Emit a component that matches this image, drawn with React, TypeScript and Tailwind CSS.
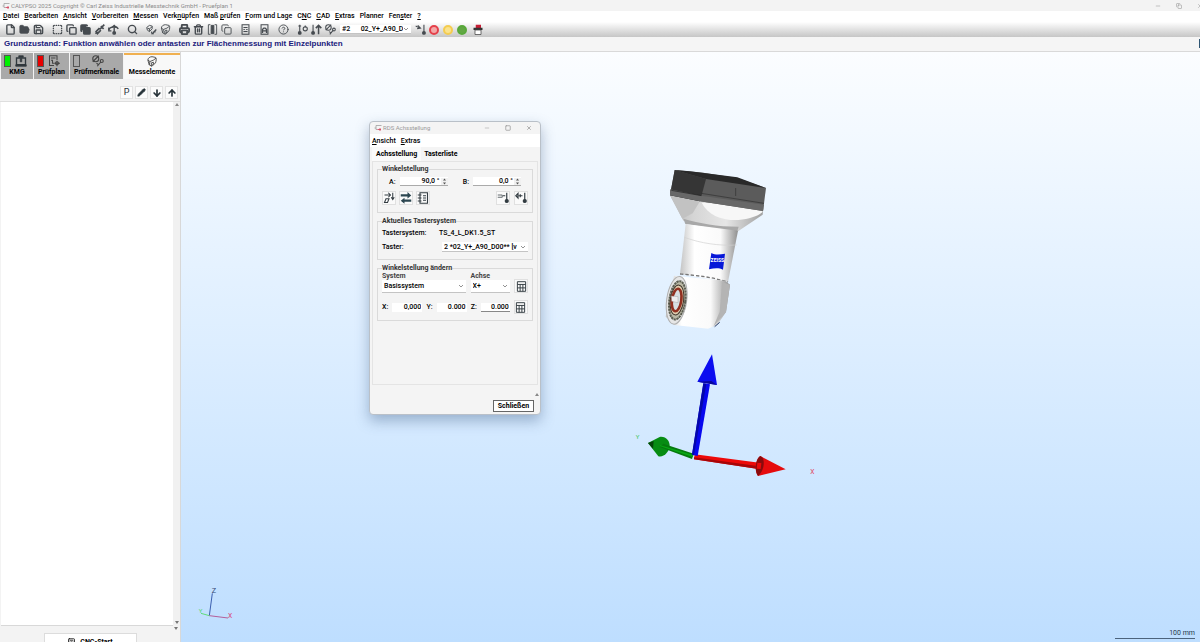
import type { ReactNode } from 'react';
import {
    ArrowDown,
    ArrowUp,
    Calculator,
    CircleHelp,
    Copy,
    File,
    FolderOpen,
    Minus,
    Pencil,
    Printer,
    Save,
    Search,
    Square,
    SquareDashed,
    Trash2,
    X,
} from 'lucide-react';

const menus = [
    ['', 'D', 'atei'],
    ['', 'B', 'earbeiten'],
    ['', 'A', 'nsicht'],
    ['', 'V', 'orbereiten'],
    ['', 'M', 'essen'],
    ['Verk', 'n', 'üpfen'],
    ['Maß ', 'p', 'rüfen'],
    ['', 'F', 'orm und Lage'],
    ['C', 'N', 'C'],
    ['', 'C', 'AD'],
    ['', 'E', 'xtras'],
    ['Planner', '', ''],
    ['Fen', 's', 'ter'],
    ['', '?', ''],
];

const iconClass = 'h-[11px] w-[11px] text-[#464b50]';

function AppLogo() {
    return (
        <svg viewBox="0 0 16 16" className="h-2 w-2 shrink-0" fill="none" strokeWidth="1.6">
            <path d="M15 3H4v5H1M4 8v3h3" stroke="#a0a0a0" />
            <path d="M7 11h7M12 8v6" stroke="#d03a55" />
        </svg>
    );
}

function ProbeIcon({ variant = 'plain' }: { variant?: 'plain' | 'rotate' | 'arrow' | 'up' | 'swap' }) {
    return (
        <svg viewBox="0 0 16 16" className={iconClass} fill="none" stroke="currentColor" strokeWidth="1.6">
            {variant === 'plain' && <path d="M15 1 8 8M10 3l4 4M8 6 3 11l2 3 5-5M2 14l2-2" strokeWidth="2.4" />}
            {variant === 'rotate' && (
                <>
                    <path d="M1 9c1-5 11-7 14-2" strokeWidth="2" />
                    <path d="M9 2v9M6 5l3-3 3 3" strokeWidth="2" />
                    <circle cx="9" cy="13" r="2" fill="currentColor" />
                    <path d="M1 5v5h4" />
                </>
            )}
            {variant === 'arrow' && (
                <>
                    <path d="M4 1v10M2 3h4" />
                    <circle cx="4" cy="13" r="2" fill="currentColor" />
                    <circle cx="12" cy="7" r="3" />
                    <path d="M12 2v3" />
                </>
            )}
            {variant === 'up' && (
                <>
                    <path d="M3 1v10" />
                    <circle cx="3" cy="13" r="2" fill="currentColor" />
                    <path d="M11 15V4M7 6l4-4 4 4" strokeWidth="2.2" />
                </>
            )}
            {variant === 'swap' && (
                <>
                    <path d="M1 3l6 3M4 2l4 4-5 1M13 1v10" />
                    <circle cx="13" cy="13" r="2" fill="currentColor" />
                </>
            )}
        </svg>
    );
}

function FeatureIcon({ className = iconClass, probe }: { className?: string; probe?: boolean }) {
    return (
        <svg viewBox="0 0 16 16" className={className} fill="none" stroke="currentColor" strokeWidth="1.3">
            {probe ? (
                <>
                    <path d="M1 5l4-3 4 1v4l-4 4-3-2zM2 6l3 1 4-3M5 7v4" />
                    <path d="M15 8l-4 4M10 15l1-3 3-1M8 11l1 4" strokeWidth="1.8" />
                </>
            ) : (
                <>
                    <path d="M2 6c0-3 3-5 6-5l5 1c2 1 1 6 0 8l-5 5-4-2zM4 13l1-5 5-2 4-3M5 8 2 6" />
                    <path d="M7 10l3-1v3l-3 2z" />
                </>
            )}
        </svg>
    );
}

function ToleranceIcon({ className = iconClass }: { className?: string }) {
    return (
        <svg viewBox="0 0 16 16" className={className} fill="none" stroke="currentColor" strokeWidth="1.5">
            <circle cx="5" cy="5" r="4" />
            <path d="M1 9 9 1M7 15l5-6" />
            <circle cx="13" cy="8" r="2" />
            <path d="M6 11l3 2" />
        </svg>
    );
}

function ColumnsIcon() {
    return (
        <svg viewBox="0 0 16 16" className={iconClass} fill="none" stroke="currentColor" strokeWidth="1.3">
            <path d="M2 1v14M14 1v14M2 1h3M11 1h3M2 15h3M11 15h3" />
            <path d="M6 2h4v12H6z" fill="currentColor" />
        </svg>
    );
}

function SheetIcon({ filled }: { filled?: boolean }) {
    return (
        <svg viewBox="0 0 16 16" className={iconClass} fill="none" stroke="currentColor" strokeWidth="1.5">
            <path d="M3 1h10v14H3z" />
            {filled ? <path d="M5 13V8l2-2h2l2 2v5M5 10h6" strokeWidth="2" /> : <path d="M5 5h6M5 8h2M9 8h2M5 11h6" />}
        </svg>
    );
}

function PlanIcon() {
    return (
        <svg viewBox="0 0 16 16" className="h-3 w-3 text-[#444]" fill="none" stroke="currentColor" strokeWidth="1.4">
            <path d="M12 7V1H2v13h6M4 4h6M4 7h2v4h3" />
            <circle cx="12" cy="11" r="2" />
            <path d="M12 8v7M9 11h7" />
        </svg>
    );
}

function Tool({ label, children }: { label: string; children: ReactNode }) {
    return (
        <button type="button" aria-label={label} className="flex h-[14px] w-[14px] items-center justify-center">
            {children}
        </button>
    );
}

function ToolGroup({ children }: { children: ReactNode }) {
    return <div className="flex items-center">{children}</div>;
}

function Light({ color }: { color: 'red' | 'yellow' | 'green' }) {
    const fills = {
        red: 'border-[#e5404a] bg-[#f3a8a8]',
        yellow: 'border-[#f4cc50] bg-[#fbe38c]',
        green: 'border-[#58a83a] bg-[#62a744]',
    };
    return <span className={`h-[10px] w-[10px] rounded-full border-2 ${fills[color]}`} />;
}

function Dropdown({ label, value, className }: { label: string; value: string; className: string }) {
    return (
        <span className={`relative flex items-center border-b border-[#c4c4c4] bg-white ${className}`}>
            <select aria-label={label} className="h-[8px] w-full appearance-none bg-transparent pr-2 pl-[2px] text-[7px] leading-[8px] text-black">
                <option>{value}</option>
            </select>
            <svg viewBox="0 0 8 8" className="pointer-events-none absolute top-1/2 right-[3px] h-1 w-1 -translate-y-1/2" fill="none" stroke="#777">
                <path d="M0 2l4 4 4-4" strokeWidth="1.6" />
            </svg>
        </span>
    );
}

function Toolbar() {
    return (
        <div className="flex h-[15px] shrink-0 items-center gap-[5px] bg-gradient-to-b from-white to-[#c6c6c6] pl-[3px]">
            <ToolGroup>
                <Tool label="Neu"><File className={iconClass} strokeWidth={3} /></Tool>
                <Tool label="Öffnen"><FolderOpen className={iconClass} fill="currentColor" /></Tool>
                <Tool label="Speichern"><Save className={iconClass} strokeWidth={3} /></Tool>
            </ToolGroup>
            <ToolGroup>
                <Tool label="Auswahl"><SquareDashed className={iconClass} strokeWidth={3} /></Tool>
                <Tool label="Kopieren"><Copy className={iconClass} strokeWidth={3} /></Tool>
                <Tool label="Einfügen"><Copy className={iconClass} strokeWidth={3} fill="currentColor" /></Tool>
                <Tool label="Taster"><ProbeIcon /></Tool>
                <Tool label="Drehen"><ProbeIcon variant="rotate" /></Tool>
            </ToolGroup>
            <Tool label="Suchen"><Search className={iconClass} strokeWidth={3} /></Tool>
            <ToolGroup>
                <Tool label="Element"><FeatureIcon probe /></Tool>
                <Tool label="Antasten"><FeatureIcon /></Tool>
            </ToolGroup>
            <ToolGroup>
                <Tool label="Drucken"><Printer className={iconClass} strokeWidth={4} /></Tool>
                <Tool label="Löschen"><Trash2 className={iconClass} strokeWidth={3} /></Tool>
                <Tool label="Spalten"><ColumnsIcon /></Tool>
                <Tool label="Duplizieren"><Copy className={iconClass} /></Tool>
            </ToolGroup>
            <Tool label="Protokoll"><SheetIcon /></Tool>
            <Tool label="Bericht"><SheetIcon filled /></Tool>
            <Tool label="Hilfe"><CircleHelp className={iconClass} /></Tool>
            <ToolGroup>
                <Tool label="Taster wechseln"><ProbeIcon variant="arrow" /></Tool>
                <Tool label="Taster anheben"><ProbeIcon variant="up" /></Tool>
                <Tool label="Toleranz"><ToleranceIcon /></Tool>
                <Dropdown label="Aktueller Taster" value={'#2\u00a0\u00a0\u00a0\u00a0\u00a0\u00a002_Y+_A90_D'} className="mr-[2px] ml-[3px] h-[9px] w-[71px] font-medium" />
                <Tool label="Taster übernehmen"><ProbeIcon variant="swap" /></Tool>
                <Tool label="Stopp"><Light color="red" /></Tool>
                <Tool label="Pause"><Light color="yellow" /></Tool>
                <Tool label="Start"><Light color="green" /></Tool>
                <Tool label="Steuerung">
                    <svg viewBox="0 0 16 16" className="ml-1 h-3 w-3 shrink-0">
                        <path d="M5 1h7v5H5z" fill="#c51e35" />
                        <path d="M2 5h12v3H2z" fill="#333" />
                        <path d="M4 8h8v6H4z" fill="#fff" stroke="#444" />
                    </svg>
                </Tool>
            </ToolGroup>
        </div>
    );
}

function PlanTab({ label, light, width, children }: { label: string; light: string; width: string; children: ReactNode }) {
    return (
        <button type="button" role="tab" aria-selected="false" className={`flex h-full flex-col items-center bg-[#a9a9a9] pt-[2px] ${width}`}>
            <span className="flex w-full items-center pl-[3px]">
                <span className={`h-3 w-[7px] border border-[#555] ${light}`} />
                <span className="ml-1 flex">{children}</span>
            </span>
            <span className="mt-px text-[7px] leading-[8px] font-bold">{label}</span>
        </button>
    );
}

function SidePanel() {
    const small = 'flex h-[13px] w-[13px] items-center justify-center border border-[#e2e2e2] bg-[#fbfbfb] text-[#263238]';
    return (
        <aside className="flex w-[181px] shrink-0 flex-col border-r border-[#d8d8d8] bg-[#f3f3f3] pt-px">
            <div role="tablist" className="flex h-[26px] shrink-0 gap-px pl-px">
                <PlanTab label="KMG" light="bg-[#00f000]" width="w-[32px]">
                    <svg viewBox="0 0 16 16" className="h-3 w-3 text-[#30383e]" fill="none" stroke="currentColor" strokeWidth="1.8">
                        <path d="M2 4h12v9H2z" />
                        <path d="M5 1h6v2H5zM7 5h2v4H7zM1 13h14v2H1z" fill="currentColor" strokeWidth="1" />
                    </svg>
                </PlanTab>
                <PlanTab label="Prüfplan" light="bg-[#e80000]" width="w-[35px]">
                    <PlanIcon />
                </PlanTab>
                <PlanTab label="Prüfmerkmale" light="bg-transparent" width="w-[53px]">
                    <ToleranceIcon className="ml-2 h-3 w-3 text-[#444]" />
                </PlanTab>
                <button type="button" role="tab" aria-selected="true" className="flex h-full flex-1 flex-col items-center border-t-2 border-[#f0b050] bg-[#f8f8f8] pt-px">
                    <FeatureIcon className="h-[11px] w-3 text-[#444]" />
                    <span className="mt-px text-[7px] leading-[8px] font-bold">Messelemente</span>
                </button>
            </div>
            <div className="flex h-[23px] shrink-0 items-center justify-end gap-[2px] border-b border-[#dedede] pt-[5px] pr-[2px]">
                <button type="button" className={`${small} text-[9px]`}>P</button>
                <button type="button" aria-label="Bearbeiten" className={small}><Pencil className="h-[9px] w-[9px]" fill="currentColor" /></button>
                <button type="button" aria-label="Nach unten" className={small}><ArrowDown className="h-[10px] w-[10px]" strokeWidth={4} /></button>
                <button type="button" aria-label="Nach oben" className={small}><ArrowUp className="h-[10px] w-[10px]" strokeWidth={4} /></button>
            </div>
            <div className="flex min-h-0 flex-1 pl-px">
                <div className="flex-1 border-b border-[#d8d8d8] bg-white" />
                <div className="flex w-[7px] flex-col items-center bg-[#f1f1f1] pt-px">
                    <svg viewBox="0 0 8 6" className="h-[3px] w-1" fill="#888"><path d="M0 6l4-6 4 6z" /></svg>
                    <svg viewBox="0 0 8 6" className="mt-auto mb-[2px] h-[3px] w-1" fill="#777"><path d="M0 0l4 6 4-6z" /></svg>
                </div>
            </div>
            <div className="relative flex h-[16px] shrink-0 justify-center overflow-hidden pt-[7px]">
                <svg viewBox="0 0 8 6" className="absolute top-px right-[2px] h-[3px] w-1" fill="#777"><path d="M0 0l4 6 4-6z" /></svg>
                <button type="button" className="flex h-[18px] w-[93px] shrink-0 items-center justify-center gap-1 border border-[#dcdcdc] bg-white text-[7px] font-bold">
                    <Calculator className="h-[9px] w-[9px]" />
                    CNC-Start
                </button>
            </div>
        </aside>
    );
}

function Group({ title, className, children }: { title: string; className: string; children: ReactNode }) {
    return (
        <fieldset className={`min-w-0 border border-[#dadada] px-1 ${className}`}>
            <legend className="text-[7px] leading-[8px] font-bold text-[#333]">{title}</legend>
            {children}
        </fieldset>
    );
}

function Field({ label, value, className, spinner }: { label: ReactNode; value: string; className: string; spinner?: boolean }) {
    return (
        <label className="flex items-center gap-1">
            <span>{label}</span>
            <span className={`flex h-[9px] items-center border-b bg-white ${className}`}>
                <input defaultValue={value} className="h-[8px] w-full min-w-0 bg-transparent pr-px text-right" />
                {spinner && (
                    <svg viewBox="0 0 8 14" className="h-[7px] w-[7px] shrink-0 bg-[#f0f0f0]" fill="#555">
                        <path d="M1 5l3-4 3 4zM1 9l3 4 3-4z" />
                    </svg>
                )}
            </span>
        </label>
    );
}

function SquareButton({ label, children }: { label: string; children: ReactNode }) {
    return (
        <button type="button" aria-label={label} className="flex h-[14px] w-[14px] items-center justify-center border border-[#e0e0e0] bg-[#fafafa]">
            {children}
        </button>
    );
}

function TableIcon() {
    return (
        <svg viewBox="0 0 16 16" className="h-[11px] w-[11px] shrink-0" fill="none" stroke="#333c42" strokeWidth="1.4">
            <path d="M2 1h12v14H2zM2 5h12M2 10h12M6 5v10M10 5v10" />
        </svg>
    );
}

function AxisDialog() {
    return (
        <section
            role="dialog"
            aria-label="RDS Achsstellung"
            className="absolute top-[69px] left-[188px] flex h-[294px] w-[172px] flex-col overflow-hidden rounded border border-[#b9c0c8] bg-[#f4f4f4] text-[7px] leading-[8px] font-medium text-black shadow-[0_6px_14px_rgba(60,90,130,0.4)]"
        >
            <header className="flex h-[12px] shrink-0 items-center pl-1 text-[6px] text-[#999]">
                <AppLogo />
                <span className="ml-px font-normal">RDS Achsstellung</span>
                <span className="ml-auto flex gap-[15px] pr-[8px]">
                    <button type="button" aria-label="Minimieren"><Minus className="h-[6px] w-[6px]" /></button>
                    <button type="button" aria-label="Maximieren"><Square className="h-[6px] w-[6px]" strokeWidth={3} /></button>
                    <button type="button" aria-label="Fenster schließen"><X className="h-[6px] w-[6px]" strokeWidth={3} /></button>
                </span>
            </header>
            <nav className="flex h-[13px] shrink-0 items-center gap-[5px] bg-white pl-[2px]">
                <button type="button"><u>A</u>nsicht</button>
                <button type="button"><u>E</u>xtras</button>
            </nav>
            <div role="tablist" className="flex h-[14px] shrink-0 items-center pl-[2px] font-bold">
                <button type="button" role="tab" aria-selected="true" className="h-full bg-[#fafafa] px-1">Achsstellung</button>
                <button type="button" role="tab" aria-selected="false" className="px-[3px]">Tasterliste</button>
            </div>
            <div className="mx-[2px] h-[224px] shrink-0 border border-[#e4e4e4] px-1 pt-[3px]">
                <Group title="Winkelstellung" className="h-[48px]">
                    <div className="flex justify-between pt-[4px] pr-[7px] pl-[7px]">
                        <Field label="A:" value="90,0 °" className="w-[48px] border-[#aaa]" spinner />
                        <Field label="B:" value="0,0 °" className="w-[48px] border-[#aaa]" spinner />
                    </div>
                    <div className="flex gap-[3px] pt-[5px]">
                        <SquareButton label="Taster abfragen">
                            <svg viewBox="0 0 16 16" className="h-3 w-3 shrink-0" fill="none" stroke="#333c42" strokeWidth="1.4">
                                <path d="M2 4h7M7 1l3 3-3 3M13 1v8M11 7l2 3 2-3M2 14l2-5h4l-2 5z" />
                            </svg>
                        </SquareButton>
                        <SquareButton label="Achsen tauschen">
                            <svg viewBox="0 0 16 16" className="h-3 w-3 shrink-0" fill="#2b4650">
                                <path d="M1 3h9V0l5 4.500-5 4V6H1zM15 10H6V7.500L1 11.500l5 4V13h9z" />
                            </svg>
                        </SquareButton>
                        <SquareButton label="Liste">
                            <svg viewBox="0 0 16 16" className="h-3 w-3 shrink-0" fill="none" stroke="#333c42" strokeWidth="1.5">
                                <path d="M4 1h10v14H4zM1 4h5M1 8h5M1 12h5M8 5h4M8 8h4M8 11h4" />
                            </svg>
                        </SquareButton>
                        <span className="ml-auto flex gap-1">
                            <SquareButton label="Taster anfahren">
                                <svg viewBox="0 0 16 16" className="h-3 w-3 shrink-0" fill="none" stroke="#333c42" strokeWidth="1.6">
                                    <path d="M1 4h6v3H1" strokeWidth="1" />
                                    <path d="M8 5h3M13 1v10" />
                                    <circle cx="13" cy="12" r="2" fill="#333c42" />
                                </svg>
                            </SquareButton>
                            <SquareButton label="Taster zurück">
                                <svg viewBox="0 0 16 16" className="h-3 w-3 shrink-0" fill="none" stroke="#333c42" strokeWidth="1.6">
                                    <path d="M4 2 1 5l3 3zM5 5h5M7 3v4" />
                                    <path d="M13 1v10" />
                                    <circle cx="13" cy="12" r="2" fill="#333c42" />
                                </svg>
                            </SquareButton>
                        </span>
                    </div>
                </Group>
                <Group title="Aktuelles Tastersystem" className="mt-1 h-[43px]">
                    <div className="flex pt-1">
                        <span className="w-[57px]">Tastersystem:</span>
                        <span>TS_4_L_DK1.5_ST</span>
                    </div>
                    <div className="flex items-center justify-between pt-[5px]">
                        <span>Taster:</span>
                        <Dropdown label="Taster" value="2 *02_Y+_A90_D00** [v" className="h-[10px] w-[86px]" />
                    </div>
                </Group>
                <Group title="Winkelstellung ändern" className="mt-1 h-[57px]">
                    <div className="flex items-end justify-between">
                        <div className="w-[84px]">
                            <span className="block font-bold text-[#444]">System</span>
                            <Dropdown label="System" value="Basissystem" className="h-[13px]" />
                        </div>
                        <div className="w-[39px]">
                            <span className="block font-bold text-[#444]">Achse</span>
                            <Dropdown label="Achse" value="X+" className="h-[13px]" />
                        </div>
                        <SquareButton label="System berechnen"><TableIcon /></SquareButton>
                    </div>
                    <div className="flex items-center justify-between pt-[7px]">
                        <Field label="X:" value="0,000" className="w-[30px] border-white" />
                        <Field label="Y:" value="0.000" className="w-[30px] border-white" />
                        <Field label="Z:" value="0.000" className="w-[29px] border-[#888]" />
                        <SquareButton label="Vektor berechnen"><TableIcon /></SquareButton>
                    </div>
                </Group>
            </div>
            <footer className="flex flex-1 flex-col items-end">
                <svg viewBox="0 0 8 6" className="mt-[8px] mr-px h-[3px] w-1" fill="#888"><path d="M0 6l4-6 4 6z" /></svg>
                <button type="button" className="mt-1 mr-[6px] h-[12px] w-[41px] border border-[#666] bg-white font-bold">Schließen</button>
            </footer>
        </section>
    );
}

function ProbeHead() {
    return (
        <svg viewBox="0 0 390 540" className="absolute top-[108px] left-[469px] h-[180px] w-[130px]">
            <defs>
                <linearGradient id="cone" x1="0" x2="1">
                    <stop offset="0" stopColor="#b9b9b9" />
                    <stop offset="0.250" stopColor="#d5d5d5" />
                    <stop offset="0.600" stopColor="#e6e6e6" />
                    <stop offset="1" stopColor="#a0a0a0" />
                </linearGradient>
                <linearGradient id="body" x1="0" x2="1">
                    <stop offset="0" stopColor="#c4c4c4" />
                    <stop offset="0.250" stopColor="#fff" />
                    <stop offset="0.700" stopColor="#fafafa" />
                    <stop offset="1" stopColor="#8f8f8f" />
                </linearGradient>
            </defs>
            {/* Flange */}
            <path d="M60 106 100 182 262 215 338 164 340 145 150 124z" fill="url(#cone)" />
            <path d="M60 106 150 124 128 160 97 176z" fill="#c2c2c2" />
            <path d="M155 128c20 38 60 54 110 52 32-3 56-10 72-23l3-20z" fill="#f7f7f7" />
            <path d="M100 176c50 14 100 24 166 24l-5 16-155-24z" fill="#a8a8a8" />
            {/* Mount */}
            <path d="M74 30 160 38 262 54 348 84 339 153 150 124 60 106z" fill="#5b5b5b" />
            <path d="M74 30 168 57 150 124 60 106z" fill="#353535" />
            <path d="M74 30 120 34 262 52 348 84 168 57z" fill="#292929" />
            <path d="M60 88 154 107 342 134 339 153 150 124 60 106z" fill="#686868" />
            <path d="M64 91 154 107" fill="none" stroke="#202020" strokeWidth="2" />
            <path d="M154 100 342 130M257 84v24" fill="none" stroke="#303030" strokeWidth="2" />
            {/* Shaft */}
            <path d="M107 192 264 212 234 366 90 342z" fill="url(#body)" />
            <path d="M103 232c50 18 104 26 157 23" fill="none" stroke="#d0d0d0" strokeWidth="2" />
            <path d="M90 342c50 4 100 10 144 24" fill="none" stroke="#777" strokeWidth="4" strokeDasharray="10 6" />
            <path d="M184 279c12 6 24 5 41 2l-6 48c-12-6-25-5-42-1z" fill="#0718d8" />
            <text x="202" y="306" textAnchor="middle" fill="#fff" fontSize="15" fontWeight="700">ZEISS</text>
            {/* Swivel joint */}
            <path d="M72 347 225 362 240 374 228 456 202 494 174 506 73 495 47 470z" fill="url(#body)" />
            <path d="M216 366 240 374 228 456 190 500 209 455z" fill="#b4b4b4" />
            <path d="M194 500l15-13" stroke="#273c69" strokeWidth="3" />
            <ellipse cx="80" cy="421" rx="30" ry="72" transform="rotate(8 80 421)" fill="#e6e6e6" stroke="#b0b0b0" strokeWidth="3" />
            <ellipse cx="82" cy="421" rx="24" ry="58" transform="rotate(8 82 421)" fill="#bab9a6" stroke="#5c5e52" strokeWidth="6" strokeDasharray="7 2" />
            <ellipse cx="81" cy="420" rx="20" ry="45" transform="rotate(8 81 420)" fill="#e0cfb0" stroke="#40352b" strokeWidth="3" />
            <ellipse cx="80" cy="420" rx="14" ry="34" transform="rotate(8 80 420)" fill="#d7e0e2" stroke="#923121" strokeWidth="8" />
            <path d="M64 408l20 2v18l-19-4z" fill="#eee" stroke="#888" />
        </svg>
    );
}

function Axes() {
    return (
        <svg viewBox="0 0 630 450" className="absolute top-[288px] left-[439px] h-[150px] w-[210px]">
            <path d="M84 309 119 291c18-3 31 12 30 28-2 18-18 34-34 30z" fill="#078c13" />
            <path d="M84 309l17-6-2 23z" fill="#06440b" />
            <path d="M119 321 216 357l5-16L130 311z" fill="#067a0e" />
            <path d="M121 316 220 345l-2 6-99-33z" fill="#08a814" />
            <path d="M224 343 418 368l-3 19-193-29z" fill="#ed0909" />
            <path d="M222 352 417 379l-2 8-193-29z" fill="#a60508" />
            <path d="M421 348 497 388 414 408c-12-15-7-53 7-60z" fill="#e50b0d" />
            <path d="M421 348c16 5 13 45-7 60-12-15-7-53 7-60z" fill="#890b0d" />
            <path d="M412 368l12 1-2 18-12-1z" fill="#e90909" />
            <path d="M250 130l20 3-37 215-17-4z" fill="#0808ef" />
            <path d="M250 130l-34 214 6 2 37-215z" fill="#0508a8" />
            <path d="M276 43l15 92-59-10z" fill="#0c0df0" />
            <path d="M232 125l59 10-17-12z" fill="#08089a" />
            <text x="47" y="297" fill="#42c45a" fontSize="18">Y</text>
            <text x="571" y="401" fill="#e0405a" fontSize="20">X</text>
        </svg>
    );
}

function Viewport() {
    return (
        <main className="relative min-w-0 flex-1 overflow-hidden bg-gradient-to-b from-[#fbfdff] to-[#bedeff]">
            <ProbeHead />
            <Axes />
            <svg viewBox="0 0 120 120" className="absolute bottom-[18px] left-[14px] h-[40px] w-[40px]" fill="none" strokeWidth="3">
                <path d="M43 95 52 28" stroke="#3c5faf" />
                <path d="M43 95 99 102" stroke="#b45f9b" />
                <path d="M43 95 18 88" stroke="#5fdd7a" />
                <text x="50" y="27" fill="#344775" fontSize="22">Z</text>
                <text x="99" y="103" fill="#d93d70" fontSize="20">X</text>
                <text x="11" y="88" fill="#50d56a" fontSize="18">Y</text>
            </svg>
            <div className="absolute right-[5px] bottom-[3px] w-[80px] border-b border-[#4c637c] text-right text-[7px] leading-[9px] text-[#26384a]">100 mm</div>
            <AxisDialog />
        </main>
    );
}

export default function App() {
    return (
        <div className="flex h-screen flex-col overflow-hidden bg-[#f3f3f3] font-[Roboto,sans-serif] text-black">
            <header className="flex h-[11px] shrink-0 items-center pl-[2px] text-[6px] text-[#8c8c8c]">
                <AppLogo />
                <h1 className="ml-px">CALYPSO 2025 Copyright © Carl Zeiss Industrielle Messtechnik GmbH - Pruefplan 1</h1>
                <span className="ml-auto flex items-center gap-[15px]">
                    <button type="button" aria-label="Minimieren"><Minus className="h-[6px] w-[6px]" /></button>
                    <button type="button" aria-label="Verkleinern"><Copy className="h-[6px] w-[6px]" /></button>
                    <button type="button" aria-label="Beenden" className="w-[3px] overflow-hidden"><X className="h-[6px] w-[6px]" /></button>
                </span>
            </header>
            <nav className="flex h-[11px] shrink-0 items-center gap-[5px] bg-white pl-[3px] text-[7px] leading-[9px]">
                {menus.map(([before, key, after]) => (
                    <button key={before + key + after} type="button" className="font-medium whitespace-pre">
                        {before}<u>{key}</u>{after}
                    </button>
                ))}
            </nav>
            <Toolbar />
            <div className="flex h-[15px] shrink-0 items-center border-b border-[#d9d9d9] bg-[#f5f5f5] pb-px pl-1">
                <p className="font-['Liberation_Sans',sans-serif] text-[8px] leading-[10px] font-bold text-[#20207c]">
                    Grundzustand: Funktion anwählen oder antasten zur Flächenmessung mit Einzelpunkten
                </p>
                <span className="ml-auto h-[9px] w-px bg-[#2f5573]" />
            </div>
            <div className="flex min-h-0 flex-1">
                <SidePanel />
                <Viewport />
            </div>
        </div>
    );
}
